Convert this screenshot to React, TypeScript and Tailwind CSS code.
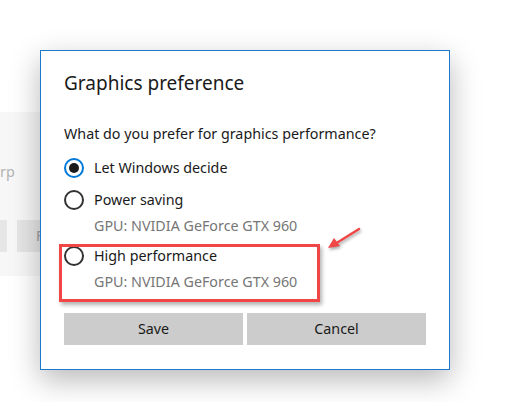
import React from "react";

const font = { fontFamily: '"Noto Sans", "Open Sans", sans-serif' };

function Radio({ checked }: { checked?: boolean }) {
  if (checked) {
    return (
      <span className="flex h-[20px] w-[20px] shrink-0 items-center justify-center rounded-full border-2 border-[#0078d7]">
        <span className="h-[10px] w-[10px] rounded-full bg-[#1a1a1a]" />
      </span>
    );
  }
  return <span className="h-[20px] w-[20px] shrink-0 rounded-full border-2 border-[#333333]" />;
}

function Option({ label, checked }: { label: string; checked?: boolean }) {
  return (
    <div className="flex h-[32px] items-center gap-[10px]">
      <Radio checked={checked} />
      <span className="text-[14.3px] leading-[20px] text-[#1a1a1a]">{label}</span>
    </div>
  );
}

function Gpu() {
  return <div className="h-[20px] pl-[30px] text-[14.3px] leading-[20px] text-[#767676]">GPU: NVIDIA GeForce GTX 960</div>;
}

export default function App() {
  return (
    <div className="relative h-[402px] w-[529px] overflow-hidden bg-white" style={font}>
      {/* settings page behind the dialog */}
      <div className="mt-[112px] flex h-[164px] w-[60px] flex-col bg-[#f7f7f7]">
        <div className="mt-[50px] text-[14.3px] leading-[20px] text-[#b3b3b3]">rp</div>
        <div className="mt-[38px] flex h-[32px] gap-[10px]">
          <div className="w-[7px] bg-[#e6e6e6]" />
          <div className="flex flex-1 items-center bg-[#e6e6e6] pl-[19px] text-[14.3px] text-[#a0a0a0]">F</div>
        </div>
      </div>

      {/* dialog */}
      <div className="absolute left-[40px] top-[50px] flex h-[320px] w-[410px] flex-col border border-[#1979ca] bg-white px-[23px] pt-[18px] shadow-[0_10px_28px_rgba(0,0,0,0.28)]">
        <div className="h-[28px] text-[19px] leading-[28px] text-[#1a1a1a]">Graphics preference</div>
        <div className="mt-[27px] h-[20px] text-[14.3px] leading-[20px] text-[#1a1a1a]">
          What do you prefer for graphics performance?
        </div>
        <div className="mt-[8px]">
          <Option label="Let Windows decide" checked />
          <Option label="Power saving" />
          <Gpu />
          <div className="mt-[4px]">
            <Option label="High performance" />
          </div>
          <Gpu />
        </div>
        <div className="mt-[21px] flex h-[32px] gap-[4px]">
          <button className="flex-1 bg-[#cccccc] text-[14.3px] text-[#1a1a1a]">Save</button>
          <button className="flex-1 bg-[#cccccc] text-[14.3px] text-[#1a1a1a]">Cancel</button>
        </div>

        {/* annotation */}
        <div className="absolute left-[18px] top-[193px] h-[58px] w-[261px] border-[3px] border-[#f04646] shadow-[2px_3px_4px_rgba(0,0,0,0.3)]" />
        <svg className="absolute left-[284px] top-[174px]" width="40" height="28" viewBox="0 0 40 28">
          <g filter="drop-shadow(1px 2px 1.5px rgba(0,0,0,0.35))">
            <line x1="34" y1="4" x2="10" y2="19" stroke="#f04646" strokeWidth="2.5" strokeLinecap="round" />
            <polygon points="3,23 9,13 15,21" fill="#f04646" />
          </g>
        </svg>
      </div>
    </div>
  );
}
